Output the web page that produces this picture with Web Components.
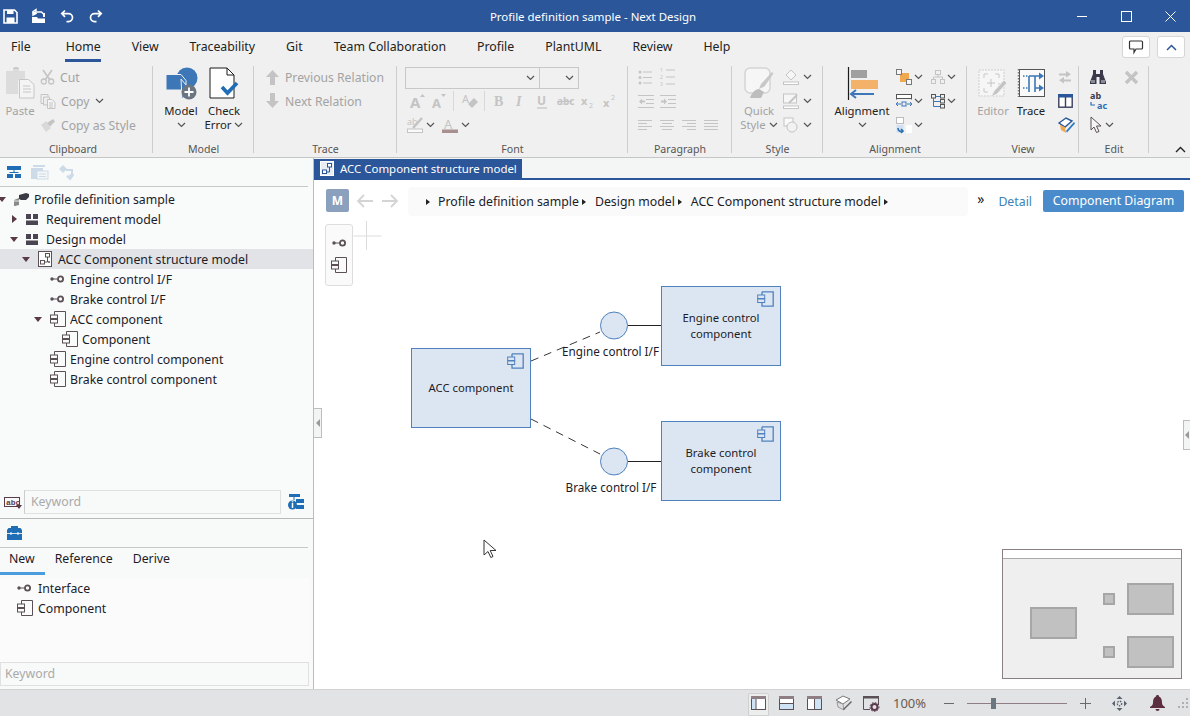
<!DOCTYPE html>
<html lang="en">
<head>
<meta charset="utf-8">
<title>Profile definition sample - Next Design</title>
<style>
  html, body { margin: 0; height: 100%; overflow: hidden; }
  body {
    font: 12.3px "Noto Sans", "Liberation Sans", sans-serif; color: #1c1c28; background: #fff;
    --fs-tree: 12.3px; --fs-small: 11.45px; --fs-tab: 12.3px; --fs-rb: 12.2px; --fs-big: 11.3px; --fs-label: 10.6px; --fs-dia: 11.3px; --fs-lab: 11.7px;
  }
</style>
</head>
<body>
<nd-app>
  <nd-titlebar slot="title">Profile definition sample - Next Design</nd-titlebar>

  <nd-tabs slot="tabs">
    <nd-tab style="margin-right:4px">File</nd-tab><nd-tab active>Home</nd-tab><nd-tab>View</nd-tab><nd-tab>Traceability</nd-tab>
    <nd-tab>Git</nd-tab><nd-tab>Team Collaboration</nd-tab><nd-tab>Profile</nd-tab><nd-tab>PlantUML</nd-tab>
    <nd-tab>Review</nd-tab><nd-tab>Help</nd-tab>
  </nd-tabs>

  <nd-ribbon slot="ribbon">
    <rb-group label="Clipboard" style="width:153px;--label-shift:7px">
      <rb-big icon="paste" width="40" disabled>Paste</rb-big>
      <rb-rows>
        <rb-small icon="cut" disabled>Cut</rb-small>
        <rb-small icon="copy" disabled chev>Copy</rb-small>
        <rb-small icon="brush" disabled>Copy as Style</rb-small>
      </rb-rows>
    </rb-group>
    <rb-group label="Model" style="width:101px">
      <rb-big icon="model" width="44" chev style="margin-left:6px">Model</rb-big>
      <rb-big icon="check" width="42">Check<span slot="l2">Error</span><nd-icon slot="l2" name="chev"></nd-icon></rb-big>
    </rb-group>
    <rb-group label="Trace" style="width:143px">
      <rb-rows style="padding-left:11px">
        <rb-small icon="up" disabled>Previous Relation</rb-small>
        <rb-small icon="down" disabled>Next Relation</rb-small>
      </rb-rows>
    </rb-group>
    <rb-group label="Font" style="width:231px">
      <rb-rows style="padding-left:8px">
        <rb-row><rb-combo style="width:135px"></rb-combo><rb-combo style="width:40px;margin-left:-1px"></rb-combo></rb-row>
        <rb-row disabled style="padding-left:5px">
          <nd-icon name="growA"></nd-icon><nd-icon name="shrinkA" style="margin-left:6px"></nd-icon>
          <rb-sep style="margin:0 8px 0 6px"></rb-sep>
          <nd-icon name="clearA"></nd-icon>
          <rb-sep style="margin:0 9px 0 6px"></rb-sep>
          <nd-icon name="bold"></nd-icon><nd-icon name="italic" style="margin-left:12px"></nd-icon>
          <nd-icon name="under" style="margin-left:11px"></nd-icon><nd-icon name="strike" style="margin-left:10px"></nd-icon>
          <nd-icon name="sub" style="margin-left:9px"></nd-icon><nd-icon name="sup" style="margin-left:9px"></nd-icon>
        </rb-row>
        <rb-row disabled style="padding-left:2px">
          <nd-icon name="marker"></nd-icon><nd-icon name="chev" style="margin-left:3px"></nd-icon>
          <nd-icon name="colorA" style="margin-left:7px"></nd-icon><nd-icon name="chev" style="margin-left:3px"></nd-icon>
        </rb-row>
      </rb-rows>
    </rb-group>
    <rb-group label="Paragraph" style="width:104px">
      <rb-rows style="padding-left:10px">
        <rb-row disabled><nd-icon name="bullets"></nd-icon><nd-icon name="numbers" style="margin-left:8px"></nd-icon></rb-row>
        <rb-row disabled><nd-icon name="outdent"></nd-icon><nd-icon name="indent" style="margin-left:6px"></nd-icon></rb-row>
        <rb-row disabled>
          <nd-icon name="alignL"></nd-icon><nd-icon name="alignC" style="margin-left:8px"></nd-icon>
          <nd-icon name="alignR" style="margin-left:8px"></nd-icon><nd-icon name="alignJ" style="margin-left:8px"></nd-icon>
        </rb-row>
      </rb-rows>
    </rb-group>
    <rb-group label="Style" style="width:91px">
      <rb-big icon="quick" width="42" disabled style="margin-left:6px">Quick<span slot="l2">Style</span><nd-icon slot="l2" name="chev"></nd-icon></rb-big>
      <rb-rows style="padding-left:3px">
        <rb-row disabled><nd-icon name="fill"></nd-icon><nd-icon name="chev" style="margin-left:4px"></nd-icon></rb-row>
        <rb-row disabled><nd-icon name="pen"></nd-icon><nd-icon name="chev" style="margin-left:4px"></nd-icon></rb-row>
        <rb-row disabled><nd-icon name="shapes"></nd-icon><nd-icon name="chev" style="margin-left:4px"></nd-icon></rb-row>
      </rb-rows>
    </rb-group>
    <rb-group label="Alignment" style="width:144px">
      <rb-big icon="align" width="60" chev style="margin-left:9px">Alignment</rb-big>
      <rb-rows style="padding-left:4px">
        <rb-row><nd-icon name="order"></nd-icon><nd-icon name="chev" style="margin-left:2px"></nd-icon></rb-row>
        <rb-row><nd-icon name="spread"></nd-icon><nd-icon name="chev" style="margin-left:2px"></nd-icon></rb-row>
        <rb-row><nd-icon name="flip"></nd-icon><nd-icon name="chev" style="margin-left:2px"></nd-icon></rb-row>
      </rb-rows>
      <rb-rows style="padding-left:8px">
        <rb-row disabled><nd-icon name="orgchart"></nd-icon><nd-icon name="chev" style="margin-left:2px"></nd-icon></rb-row>
        <rb-row><nd-icon name="treeview"></nd-icon><nd-icon name="chev" style="margin-left:2px"></nd-icon></rb-row>
      </rb-rows>
    </rb-group>
    <rb-group label="View" style="width:112px">
      <rb-big icon="editor" width="36" disabled style="margin-left:8px">Editor</rb-big>
      <rb-big icon="trace" width="36" style="margin-left:2px">Trace</rb-big>
      <rb-rows style="padding-left:9px">
        <rb-row disabled><nd-icon name="swap"></nd-icon></rb-row>
        <rb-row><nd-icon name="split"></nd-icon></rb-row>
        <rb-row><nd-icon name="stylepen"></nd-icon></rb-row>
      </rb-rows>
    </rb-group>
    <rb-group label="Edit" style="width:70px">
      <rb-rows style="padding-left:11px">
        <rb-row><nd-icon name="binoc"></nd-icon><nd-icon name="cross" style="margin-left:18px"></nd-icon></rb-row>
        <rb-row><nd-icon name="replace"></nd-icon></rb-row>
        <rb-row><nd-icon name="pointer"></nd-icon><nd-icon name="chev" style="margin-left:2px"></nd-icon></rb-row>
      </rb-rows>
    </rb-group>
  </nd-ribbon>

  <nd-sidebar slot="side">
    <tree-item level="0" icon="pkg" arrow="open">Profile definition sample</tree-item>
    <tree-item level="1" icon="blocks" arrow="closed">Requirement model</tree-item>
    <tree-item level="1" icon="blocks" arrow="open">Design model</tree-item>
    <tree-item level="2" icon="diagram" arrow="open" selected>ACC Component structure model</tree-item>
    <tree-item level="3" icon="iface">Engine control I/F</tree-item>
    <tree-item level="3" icon="iface">Brake control I/F</tree-item>
    <tree-item level="3" icon="comp" arrow="open">ACC component</tree-item>
    <tree-item level="4" icon="comp">Component</tree-item>
    <tree-item level="3" icon="comp">Engine control component</tree-item>
    <tree-item level="3" icon="comp">Brake control component</tree-item>

    <palette-item slot="palette" icon="iface">Interface</palette-item>
    <palette-item slot="palette" icon="comp">Component</palette-item>
  </nd-sidebar>

  <nd-editor slot="main">
    <nd-breadcrumb slot="crumbs">
      <span>Profile definition sample</span><span>Design model</span><span>ACC Component structure model</span>
    </nd-breadcrumb>
    <nd-diagram slot="canvas"></nd-diagram>
  </nd-editor>

  <nd-statusbar slot="status"></nd-statusbar>
</nd-app>

<script>
// Icons are drawn at their natural pixel size: [width, height, svg content]
const G = 'currentColor';
const ICONS = {
  save: [15, 15, `<path d="M1 1h10.500L14 3.500V14H1z" fill="none" stroke="#fff" stroke-width="1.600"/><rect x="4" y="1" width="6.500" height="4" fill="#fff"/><rect x="3.500" y="8.500" width="8" height="5.500" fill="#fff"/>`],
  open: [16, 15, `<path d="M1 8h5l1 1.500h7V14H1z" fill="#fff"/><path d="M2 6V2.500L5 .5v4zM6 3h4.500l3 3" fill="none" stroke="#fff" stroke-width="1.400"/><path d="M1.500 2.500h4V5h-4z" fill="#fff"/><path d="M12 4h2v4h-2z" fill="#fff"/>`],
  undo: [15, 14, `<path d="M5 1.500 1.800 4.600 5 7.800M2 4.600h6.500a4 4 0 0 1 0 8H6.500" fill="none" stroke="#fff" stroke-width="1.700"/>`],
  redo: [15, 14, `<path d="M10 1.500l3.200 3.100L10 7.800M13 4.600H6.500a4 4 0 0 0 0 8h2" fill="none" stroke="#fff" stroke-width="1.700"/>`],
  chev: [9, 6, `<path d="M1 1l3.500 3.500L8 1" fill="none" stroke="#555" stroke-width="1.200"/>`],

  paste: [30, 34, `<path d="M1 5h7V3h6v2h6v9h-7v14H1z" fill="#dcdcdc"/><path d="M8 3a3 2 0 0 1 6 0" fill="#c8c8c8"/><path d="M14.500 13.500h9l5.500 5v13.500h-14.500z" fill="#f4f4f4" stroke="#c6c6c6"/><path d="M18 20h7M18 23h8M18 26h8" stroke="#c6c6c6"/>`],
  cut: [15, 16, `<path d="M3 1l7 10M12 1 5 11" stroke="${G}" stroke-width="1.600"/><circle cx="3.800" cy="12.500" r="2.500" fill="none" stroke="${G}" stroke-width="1.300"/><circle cx="11.200" cy="12.500" r="2.500" fill="none" stroke="${G}" stroke-width="1.300"/>`],
  copy: [16, 16, `<path d="M1 1.500h7v2M1 1.500v9h4" fill="none" stroke="${G}"/><path d="M3.500 4h6v8h-6z" fill="#ececec" stroke="${G}"/><path d="M7.500 6.500h4.500l3 3v6H7.500z" fill="#f4f4f4" stroke="${G}"/><path d="M9 10h4M9 12h4M9 14h4" stroke="${G}"/>`],
  brush: [16, 15, `<path d="M1 7l5-4 5 7-5 4z" fill="#d9d9d9"/><path d="M7 5l6-4 2 2.500-5 5z" fill="${G}"/>`],
  up: [15, 16, `<path d="M7.500 1 14 8h-4v8H5V8H1z" fill="${G}"/>`],
  down: [15, 16, `<path d="M7.500 15 1 8h4V0h5v8h4z" fill="${G}"/>`],
  model: [33, 33, `<circle cx="22" cy="11" r="10.500" fill="#3d77b7"/><path d="M1 7.500h15l5 6V23H1z" fill="#3d77b7" stroke="#f0f0f0"/><path d="M16 12 26 24l-9 8z" fill="#3d77b7" stroke="#f0f0f0"/><circle cx="24" cy="25" r="7.500" fill="#6c7680"/><path d="M24 20.500v9M19.500 25h9" stroke="#fff" stroke-width="1.800"/>`],
  check: [30, 32, `<path d="M1 1h17l7 7v23H1z" fill="#fff" stroke="#1c1c1c" stroke-width="1"/><path d="M18 1v7h7" fill="none" stroke="#1c1c1c"/><path d="M13 20l5.500 6L28 16" fill="none" stroke="#1f6eb5" stroke-width="3.600"/>`],

  growA: [16, 16, `<text x="0" y="15" font-size="15" font-weight="700" fill="${G}">A</text><path d="M10 4l2.500-3L15 4z" fill="${G}"/>`],
  shrinkA: [15, 16, `<text x="0" y="15" font-size="13" font-weight="700" fill="${G}">A</text><path d="M9 1h5l-2.500 3z" fill="${G}"/>`],
  clearA: [16, 16, `<text x="0" y="10" font-size="11" fill="${G}">A</text><path d="M6 11l6-6 4 4-6 6z" fill="${G}"/>`],
  bold: [10, 14, `<text x="0" y="12" font-size="14" font-weight="700" font-family="Liberation Serif" fill="${G}">B</text>`],
  italic: [10, 14, `<text x="0" y="12" font-size="14" font-style="italic" font-weight="700" font-family="Liberation Serif" fill="${G}">I</text>`],
  under: [10, 15, `<text x="0" y="11" font-size="12" font-weight="700" fill="${G}">U</text><path d="M0 14h10" stroke="${G}" stroke-width="1.300"/>`],
  strike: [15, 12, `<text x="0" y="10" font-size="10" font-weight="700" fill="${G}">abc</text><path d="M0 6.500h15" stroke="${G}"/>`],
  sub: [13, 14, `<text x="0" y="11" font-size="11" font-weight="700" fill="${G}">x</text><text x="8" y="14" font-size="7" fill="${G}">2</text>`],
  sup: [13, 14, `<text x="0" y="13" font-size="11" font-weight="700" fill="${G}">x</text><text x="8" y="6" font-size="7" fill="${G}">2</text>`],
  marker: [16, 16, `<text x="0" y="8" font-size="9" fill="${G}">ab</text><path d="M6 11 15 1" stroke="${G}" stroke-width="2.500"/><rect x=".5" y="12" width="15" height="3.500" fill="#fbfbfb" stroke="${G}"/>`],
  colorA: [16, 16, `<text x="2" y="12" font-size="13" fill="${G}">A</text><rect y="12.500" width="16" height="3.500" fill="#a89090"/>`],

  bullets: [14, 15, `<g fill="${G}"><circle cx="2" cy="2" r="1.500"/><circle cx="2" cy="7.500" r="1.500"/><circle cx="2" cy="13" r="1.500"/></g><path d="M5 2h9M5 7.500h9M5 13h9" stroke="${G}"/>`],
  numbers: [15, 18, `<text x="0" y="4" font-size="5" fill="${G}">1</text><text x="0" y="11" font-size="5" fill="${G}">2</text><text x="0" y="18" font-size="5" fill="${G}">3</text><path d="M6 2h9M6 9h9M6 16h9" stroke="${G}"/>`],
  outdent: [16, 13, `<path d="M0 .500h16M8 4.500h8M8 8.500h8M0 12.500h16" stroke="${G}"/><path d="M1 6.500l3-3v2h3v2H4v2z" fill="${G}"/>`],
  indent: [16, 13, `<path d="M0 .500h16M8 4.500h8M8 8.500h8M0 12.500h16" stroke="${G}"/><path d="M7 6.500l-3-3v2H1v2h3v2z" fill="${G}"/>`],
  alignL: [14, 10, `<path d="M0 .500h14M0 3.500h9M0 6.500h14M0 9.500h9" stroke="${G}"/>`],
  alignC: [14, 10, `<path d="M0 .500h14M2 3.500h10M0 6.500h14M2 9.500h10" stroke="${G}"/>`],
  alignR: [14, 10, `<path d="M0 .500h14M5 3.500h9M0 6.500h14M5 9.500h9" stroke="${G}"/>`],
  alignJ: [14, 10, `<path d="M0 .500h14M0 3.500h14M0 6.500h14M0 9.500h14" stroke="${G}"/>`],

  quick: [30, 32, `<rect x="1" y="1" width="25" height="25" rx="5" fill="#f6f6f6" stroke="#d4d4d4" stroke-width="1.500"/><path d="M15 22l2-5 11-12 1.500 1.500-9 13z" fill="#c8c8c8"/><path d="M6 31c1-4 5-9 9-9l5 3-3 6z" fill="#bdbdbd"/>`],
  fill: [16, 16, `<path d="M8 1 3 6l5 5 5-5z" fill="#f6f6f6" stroke="${G}"/><rect x=".5" y="13" width="15" height="2.500" fill="#fff" stroke="${G}"/>`],
  pen: [16, 16, `<rect x=".5" y="1" width="13" height="9" fill="#f6f6f6" stroke="${G}"/><path d="M6 10 14 2" stroke="${G}" stroke-width="2"/><rect x=".5" y="13" width="15" height="2.500" fill="#fff" stroke="${G}"/>`],
  shapes: [16, 16, `<rect x="1" y="1" width="9" height="8" fill="#fafafa" stroke="${G}"/><circle cx="9" cy="10" r="5" fill="#f2f2f2" stroke="${G}"/>`],

  align: [31, 33, `<path d="M1.500 0v33" stroke="#1c1c1c" stroke-width="1.200"/><rect x="4" y="3" width="16" height="8" fill="#a0a0a0"/><rect x="4" y="13" width="27" height="9" fill="#f2b26a"/><path d="M4 27h23M9 23l-5 4 5 4" fill="none" stroke="#3d77b7" stroke-width="2"/>`],
  order: [16, 16, `<rect x="4" y="4" width="9" height="9" fill="#f0a94e"/><rect x=".5" y=".5" width="5" height="5" fill="#f6f6f6" stroke="#777"/><rect x="10.500" y="10.500" width="5" height="5" fill="#f6f6f6" stroke="#777"/>`],
  spread: [16, 14, `<rect x=".5" y=".5" width="15" height="4" fill="#fff" stroke="#555"/><path d="M.5 4.500v1M15.500 4.500v1" stroke="#555"/><rect x="6" y="8" width="4" height="4" fill="none" stroke="#3d77b7"/><path d="M0 10h5M11 10h5M2 8l-2 2 2 2M14 8l2 2-2 2" fill="none" stroke="#3d77b7"/>`],
  flip: [16, 16, `<rect x=".5" y=".5" width="7" height="6" fill="#fff" stroke="#bbb"/><rect x=".5" y="8" width="7" height="7.500" fill="#cfe0f2"/><rect x="10" y="8" width="6" height="8" fill="#fff"/><path d="M2 11c0 3 2 4 5 3M5 12l2 2-2 2" fill="none" stroke="#2d6fb3" stroke-width="1.600"/>`],
  orgchart: [14, 14, `<g fill="none" stroke="${G}"><rect x="4.500" y=".5" width="5" height="4"/><rect x=".5" y="9.500" width="4" height="4"/><rect x="9.500" y="9.500" width="4" height="4"/><path d="M7 4.500V7H2.500v2.500M7 7h4.500v2.500"/></g>`],
  treeview: [14, 15, `<g fill="none" stroke="#555"><rect x=".5" y=".5" width="4" height="3.500"/><rect x="9.500" y=".5" width="4" height="3.500"/><rect x="9.500" y="5.500" width="4" height="3.500"/><rect x="9.500" y="10.500" width="4" height="3.500"/></g><path d="M2.500 4v8.500h7M2.500 7.500h7M4.500 2.500h5" fill="none" stroke="#3d77b7"/>`],
  editor: [30, 29, `<rect x="1" y="1" width="25" height="26" fill="#f6f6f6" stroke="#cfcfcf" stroke-dasharray="2 1"/><path d="M6 9V5h4M17 5h4v4M6 19v4h4M21 14v2" fill="none" stroke="#c8c8c8"/><path d="M13 10v8M9 14h8" stroke="#c4c4c4"/><path d="M13 28l3-6 10-11 3 3-10 11z" fill="#c4c4c4" stroke="#f0f0f0"/>`],
  trace: [27, 28, `<rect x="1.500" y=".5" width="25" height="27" fill="#fafafa" stroke="#555"/><path d="M.5 0v28" stroke="#777" stroke-width="1.400" stroke-dasharray="1.500 1.500"/><path d="M5 7h5M5 19h5" stroke="#3d77b7" stroke-width="1.600" stroke-dasharray="1.500 1.500"/><path d="M11 7v16M17 7v16M11 7h6M17 7h4M17 19h4" fill="none" stroke="#3d77b7" stroke-width="1.600"/><path d="M21 3.500 26 7l-5 3.500zM21 15.500l5 3.500-5 3.500z" fill="#3d77b7"/>`],
  swap: [14, 13, `<path d="M1 2.500h7V0l5 3.200-5 3.200V4.500H1z" fill="${G}"/><path d="M13 8.500H6V6l-5 3.200 5 3.200v-2h7z" fill="${G}"/>`],
  split: [15, 14, `<rect x=".8" y=".8" width="13.400" height="12.400" fill="#fff" stroke="#3a3f5c" stroke-width="1.400"/><rect x="0" y="0" width="15" height="3.500" fill="#2b579a"/><path d="M7.500 3v10" stroke="#3a3f5c" stroke-width="1.400"/>`],
  stylepen: [17, 17, `<path d="M1 6l7-5 6 3-7 6z" fill="#fff" stroke="#2b579a" stroke-width="1.400"/><path d="M2 8l5 2 1 6-5-3z" fill="#f0a94e"/><path d="M8 14l8-9 1 1.500-8 9z" fill="#2b78c0"/>`],
  binoc: [16, 14, `<path d="M3 0h3v4h4V0h3v4l3 8v2H9.500V7h-3v7H0v-2l3-8z" fill="#3a3a4a"/><rect x="1" y="10" width="4" height="3" fill="#8a8a96"/><rect x="11" y="10" width="4" height="3" fill="#8a8a96"/>`],
  cross: [15, 15, `<path d="M2 2l11 11M13 2 2 13" stroke="#c4c4c4" stroke-width="3.400"/>`],
  replace: [17, 19, `<text x="0" y="7" font-size="9" font-weight="700" fill="#3a3a4a">ab</text><text x="7" y="17" font-size="9" font-weight="700" fill="#2d6fb3">ac</text><path d="M1 10v3h4" fill="none" stroke="#2d6fb3" stroke-width="1.200"/>`],
  pointer: [13, 18, `<path d="M1 1v13l3-3 2.500 5.500 2.500-1L6.500 10H11z" fill="#f6f6f6" stroke="#5a5055"/>`],

  hier: [14, 12, `<g fill="#1f6eb5"><rect width="14" height="4"/><rect x="6.500" y="4" width="1" height="2"/><rect x="2.500" y="6" width="9" height="1"/><rect y="8" width="6" height="4"/><rect x="8" y="8" width="6" height="4"/></g>`],
  hierOff: [17, 14, `<rect x="2" y="0" width="12" height="2" fill="#cddbe8"/><rect x="0" y="3" width="12" height="11" fill="#cddbe8"/><rect x="6" y="6" width="11" height="8" fill="#f4f6f8" stroke="#cddbe8"/><path d="M8 9h7M8 11.500h7" stroke="#cddbe8"/>`],
  flowOff: [15, 16, `<path d="M1 5l4-4 4 4-4 4z" fill="#cddbe8"/><path d="M8 6h6v4M11 13l3-3 1 1-3 4-3-3z" fill="none" stroke="#cddbe8" stroke-width="2"/>`],
  pkg: [15, 13, `<path d="M0 7l5-2v7l-4 1H0z" fill="#8a8a8a"/><path d="M0 8h5" stroke="#e8e8e8"/><path d="M5 2l7-2 3 1v3l-3 3H7l-2-1z" fill="#3a3a44"/>`],
  blocks: [12, 11, `<rect x="0" y="0" width="5" height="5" fill="#4a4550"/><rect x="7" y="0" width="5" height="5" fill="#4a4550"/><rect x="0" y="6.500" width="12" height="4.500" fill="#4a4550"/>`],
  diagram: [14, 16, `<rect x=".5" y=".5" width="13" height="15" fill="#fff" stroke="#5a5055"/><rect x="7.500" y="2.500" width="4" height="3.500" fill="none" stroke="#5a5055"/><rect x="2.500" y="9.500" width="4" height="3.500" fill="none" stroke="#5a5055"/><path d="M9.500 6v5h-3" fill="none" stroke="#5a5055"/><circle cx="11" cy="11" r="1" fill="#5a5055"/>`],
  docdiagram: [14, 15, `<rect x=".5" y=".5" width="13" height="14" fill="#e8edf4" stroke="#fff"/><rect x="7.500" y="2.500" width="4" height="3.500" fill="#fff" stroke="#2b579a"/><rect x="2.500" y="9" width="4" height="3.500" fill="#fff" stroke="#2b579a"/><path d="M9.500 6v5h-3" fill="none" stroke="#2b579a"/>`],
  iface: [15, 8, `<circle cx="2" cy="4" r="1.700" fill="#5a5055"/><path d="M3 4h4" stroke="#5a5055"/><circle cx="10.500" cy="4" r="2.600" fill="none" stroke="#5a5055" stroke-width="1.800"/>`],
  comp: [16, 16, `<path d="M4.500 .5h11v15h-11V12M4.500 4V.5M4.500 8.500V7.500" fill="none" stroke="#5a5055"/><rect x=".5" y="4" width="7" height="3.500" fill="none" stroke="#5a5055"/><rect x=".5" y="8.500" width="7" height="3.500" fill="none" stroke="#5a5055"/>`],
  compBlue: [17, 16, `<path d="M5 .8h11.200v14.400H5V11M5 4V.8M5 8.500V8" fill="none" stroke="#4f81bd" stroke-width="1.300"/><rect x=".7" y="4" width="7" height="3.500" fill="#dce6f2" stroke="#4f81bd"/><rect x=".7" y="8" width="7" height="3.500" fill="#dce6f2" stroke="#4f81bd"/>`],
  abc: [18, 14, `<rect x=".5" y="1.500" width="15" height="9" fill="none" stroke="#5b3a4a"/><text x="2" y="9" font-size="8" font-weight="700" font-family="Liberation Mono" fill="#5b3a4a">abc</text><path d="M12 9h6l-3 4z" fill="#5b3a4a"/>`],
  info: [16, 16, `<rect x="1" y="0" width="11" height="3" fill="#1f6eb5"/><path d="M6 3v3" stroke="#1f6eb5"/><rect x="8" y="5" width="8" height="4" fill="#1f6eb5"/><rect x="8" y="11" width="8" height="4" fill="#1f6eb5"/><circle cx="4.500" cy="11" r="4.500" fill="#1f6eb5"/><path d="M4.500 9v5M4.500 7.200v1" stroke="#fff" stroke-width="1.500"/>`],
  toolbox: [15, 14, `<path d="M4 2V0h7v2h2.500L15 4v10H0V4l1.500-2z" fill="#1f6eb5"/><path d="M0 7.500h15" stroke="#fff" stroke-width=".8"/><path d="M4 6v3M11 6v3" stroke="#fff"/>`],
  back: [16, 14, `<path d="M7 1 1 7l6 6M1 7h15" fill="none" stroke="#d4d4d4" stroke-width="1.800"/>`],
  forward: [16, 14, `<path d="M9 1l6 6-6 6M15 7H0" fill="none" stroke="#d4d4d4" stroke-width="1.800"/>`],

  layoutA: [15, 14, `<rect x=".5" y=".5" width="14" height="13" fill="#fff" stroke="#5a5055"/><rect y="0" width="15" height="3" fill="#8f7f85"/><rect x="1" y="3" width="4" height="10" fill="#cfe3f5"/><path d="M5 3v10" stroke="#5a5055"/>`],
  layoutB: [15, 14, `<rect x=".5" y=".5" width="14" height="13" fill="#fff" stroke="#5a5055"/><rect y="0" width="15" height="3" fill="#8f7f85"/><rect x="1" y="8" width="13" height="5" fill="#cfe3f5"/><path d="M0 7.500h15" stroke="#5a5055"/>`],
  layoutC: [15, 14, `<rect x=".5" y=".5" width="14" height="13" fill="#fff" stroke="#5a5055"/><rect y="0" width="15" height="3" fill="#8f7f85"/><rect x="8" y="3" width="6" height="10" fill="#cfe3f5"/><path d="M7.500 3v10" stroke="#5a5055"/>`],
  pens: [17, 16, `<path d="M1 5l7-4 7 3-7 5z" fill="#fff" stroke="#777"/><path d="M2 7l6 2 1 6-6-3z" fill="#ddd" stroke="#999"/><path d="M8 14l8-8 1 1-8 8z" fill="#666"/>`],
  winset: [16, 15, `<path d="M.5 13.500V.5h15V9M.5 13.500H7" fill="none" stroke="#5a5055"/><rect y="0" width="16" height="2.500" fill="#5a5055"/><circle cx="11.500" cy="11" r="3" fill="none" stroke="#5a3a48" stroke-width="2"/><circle cx="11.500" cy="11" r="4.500" fill="none" stroke="#5a3a48" stroke-dasharray="1.500 1.500"/>`],
  move: [15, 15, `<path d="M7.500 0l3 3h-6zM7.500 15l3-3h-6zM0 7.500l3-3v6zM15 7.500l-3-3v6z" fill="#5a6470"/><circle cx="7.500" cy="7.500" r="2.200" fill="none" stroke="#5a6470" stroke-width="1.400" stroke-dasharray="1.400 1"/>`],
  bell: [15, 16, `<path d="M7.500 0c1 0 1.500.5 1.500 1.500C11.500 2.500 12 5 12 8c0 2 1.500 3 3 4v1H0v-1c1.500-1 3-2 3-4 0-3 .5-5.500 3-6.500C6 .5 6.500 0 7.500 0z" fill="#5b2f40"/><path d="M5.500 14a2 2 0 0 0 4 0z" fill="#5b2f40"/>`],
  grip: [10, 10, `<g fill="#aeb0b3"><rect x="8" y="0" width="2" height="2"/><rect x="4" y="4" width="2" height="2"/><rect x="8" y="4" width="2" height="2"/><rect x="0" y="8" width="2" height="2"/><rect x="4" y="8" width="2" height="2"/><rect x="8" y="8" width="2" height="2"/></g>`],
  feedback: [14, 14, `<path d="M1.500 1h11a1 1 0 0 1 1 1v6a1 1 0 0 1-1 1H7l-2 3.500V9H1.500a1 1 0 0 1-1-1V2a1 1 0 0 1 1-1z" fill="#fff" stroke="#333" stroke-width="1.200"/>`],
  chevUp: [11, 7, `<path d="M1 6l4.500-4.500L10 6" fill="none" stroke="#2b579a" stroke-width="1.500"/>`],
  chevUpDark: [11, 7, `<path d="M1 6l4.500-4.500L10 6" fill="none" stroke="#222" stroke-width="1.400"/>`]
};

// Small base class: sets up the open shadow root and renders once connected
class ShadowEl extends HTMLElement {
  constructor() {
    super();
    this.attachShadow({ mode: 'open' });
  }
  connectedCallback() {
    this.shadowRoot.innerHTML = `<style>${this.css()}</style>${this.html()}`;
  }
  css() { return ':host{display:block}'; }
  html() { return '<slot></slot>'; }
}

class NdIcon extends ShadowEl {
  css() { return ':host{display:inline-flex;flex:none;line-height:0}svg{display:block;overflow:visible;font-family:"Noto Sans","Liberation Sans",sans-serif}'; }
  html() {
    const [w, h, body] = ICONS[this.getAttribute('name')] || [16, 16, ''];
    return `<svg xmlns="http://www.w3.org/2000/svg" width="${w}" height="${h}" viewBox="0 0 ${w} ${h}">${body}</svg>`;
  }
}
customElements.define('nd-icon', NdIcon);

class NdApp extends ShadowEl {
  css() {
    return `:host{display:grid;grid-template-rows:32px 32px 94px 531px 27px;grid-template-columns:314px 876px;width:1190px;height:716px}
      .top{grid-column:1/3;min-width:0}`;
  }
  html() {
    return `<div class="top"><slot name="title"></slot></div>
      <div class="top"><slot name="tabs"></slot></div>
      <div class="top"><slot name="ribbon"></slot></div>
      <slot name="side"></slot><slot name="main"></slot>
      <div class="top"><slot name="status"></slot></div>`;
  }
}
customElements.define('nd-app', NdApp);

class NdTitlebar extends ShadowEl {
  css() {
    return `:host{display:grid;grid-template-columns:1fr auto 1fr;align-items:center;height:32px;background:#2b579a;color:#fff;font-size:var(--fs-small)}
      .left{display:flex;align-items:center;gap:13px;padding-left:3px}
      .mid{padding-right:4px}
      .win{display:flex;justify-content:flex-end;margin-right:-2px}
      .win span{width:44px;height:32px;display:flex;align-items:center;justify-content:center}
      .min{width:10px;height:1px;background:#fff}
      .max{width:9px;height:9px;border:1px solid #fff}`;
  }
  html() {
    return `<div class="left"><nd-icon name="save"></nd-icon><nd-icon name="open"></nd-icon><nd-icon name="undo"></nd-icon><nd-icon name="redo"></nd-icon></div>
      <div class="mid"><slot></slot></div>
      <div class="win"><span><i class="min"></i></span><span><i class="max"></i></span>
      <span><svg width="11" height="11"><path d="M.5.5l10 10M10.500.5l-10 10" stroke="#fff"/></svg></span></div>`;
  }
}
customElements.define('nd-titlebar', NdTitlebar);

class NdTabs extends ShadowEl {
  css() {
    return `:host{display:flex;height:32px;background:#f0f0f0;padding-left:11px;gap:31px;position:relative}
      .btns{position:absolute;right:5px;top:4px;display:flex;gap:7px}
      .btns span{width:26px;height:20px;background:#fff;border:1px solid #d6d6d6;border-radius:3px;display:flex;align-items:center;justify-content:center}`;
  }
  html() {
    return `<slot></slot><div class="btns"><span><nd-icon name="feedback"></nd-icon></span><span><nd-icon name="chevUp"></nd-icon></span></div>`;
  }
}
customElements.define('nd-tabs', NdTabs);

class NdTab extends ShadowEl {
  css() {
    return `:host{display:block;position:relative;line-height:30px;font-size:var(--fs-tab);color:#222;white-space:nowrap}
      :host([active])::after{content:"";position:absolute;left:-1px;right:0;top:27px;height:3px;background:#2b579a}`;
  }
}
customElements.define('nd-tab', NdTab);

class NdRibbon extends ShadowEl {
  css() {
    return `:host{display:flex;position:relative;height:94px;background:#f0f0f0;border-bottom:1px solid #c6c6c6;box-sizing:border-box}
      nd-icon{position:absolute;right:4px;bottom:4px}`;
  }
  html() { return `<slot></slot><nd-icon name="chevUpDark"></nd-icon>`; }
}
customElements.define('nd-ribbon', NdRibbon);

class RbGroup extends ShadowEl {
  css() {
    return `:host{display:flex;flex-direction:column;flex:none;box-sizing:border-box;height:93px;position:relative}
      :host::after{content:"";position:absolute;right:0;top:2px;bottom:4px;width:1px;background:#cdcdcd}
      .body{display:flex;height:76px;padding-top:1px}
      .label{text-align:center;line-height:16px;color:#555;font-size:var(--fs-label);padding-right:var(--label-shift,0)}`;
  }
  html() {
    return `<div class="body"><slot></slot></div><div class="label">${this.getAttribute('label')}</div>`;
  }
}
customElements.define('rb-group', RbGroup);

class RbBig extends ShadowEl {
  css() {
    const w = this.getAttribute('width') || 40;
    return `:host{display:flex;flex-direction:column;align-items:center;flex:none;width:${w}px;color:#222;font-size:var(--fs-big)}
      :host([disabled]){color:#a3a3a3}
      .ic{height:36px;padding-bottom:3px;display:flex;align-items:center;justify-content:center}
      .ln{line-height:14px;height:14px;white-space:nowrap;display:flex;align-items:center;gap:3px}`;
  }
  html() {
    const chev = this.hasAttribute('chev') ? '<nd-icon name="chev"></nd-icon>' : '';
    return `<div class="ic"><nd-icon name="${this.getAttribute('icon')}"></nd-icon></div>
      <div class="ln"><slot></slot></div><div class="ln"><slot name="l2"></slot>${chev}</div>`;
  }
}
customElements.define('rb-big', RbBig);

class RbRows extends ShadowEl {
  css() { return ':host{display:flex;flex-direction:column;flex:none}'; }
}
customElements.define('rb-rows', RbRows);

class RbRow extends ShadowEl {
  css() { return ':host{display:flex;align-items:center;height:24px;color:#222}:host([disabled]){color:#c4c4c4}'; }
}
customElements.define('rb-row', RbRow);

class RbSmall extends ShadowEl {
  css() {
    return `:host{display:flex;align-items:center;height:24px;gap:5px;color:#222;font-size:var(--fs-rb);white-space:nowrap}
      :host([disabled]){color:#a3a3a3}
      .ic{color:#c4c4c4;display:flex}`;
  }
  html() {
    const chev = this.hasAttribute('chev') ? '<nd-icon name="chev"></nd-icon>' : '';
    return `<span class="ic"><nd-icon name="${this.getAttribute('icon')}"></nd-icon></span><slot></slot>${chev}`;
  }
}
customElements.define('rb-small', RbSmall);

class RbCombo extends ShadowEl {
  css() {
    return `:host{display:flex;align-items:center;justify-content:flex-end;height:22px;margin-top:2px;box-sizing:border-box;border:1px solid #c8c8c8;padding-right:4px;flex:none}`;
  }
  html() { return '<nd-icon name="chev"></nd-icon>'; }
}
customElements.define('rb-combo', RbCombo);

class RbSep extends ShadowEl {
  css() { return ':host{display:block;width:1px;height:20px;background:#d8d8d8;flex:none}'; }
  html() { return ''; }
}
customElements.define('rb-sep', RbSep);

class TreeItem extends ShadowEl {
  css() {
    const lv = Number(this.getAttribute('level') || 0);
    return `:host{display:flex;align-items:center;height:20px;padding-left:${12 * lv}px;font-size:var(--fs-tree);white-space:nowrap;color:#1c1c28}
      :host([selected]){background:#e1e3e6}
      .ar{width:12px;height:20px;margin-left:-4px;display:flex;align-items:center;justify-content:center;flex:none}
      .ic{width:26px;display:flex;justify-content:flex-start;padding-left:6px;box-sizing:border-box;flex:none}`;
  }
  html() {
    const a = this.getAttribute('arrow');
    const arrow = a === 'open' ? '<svg width="8" height="5"><path d="M0 0h8L4 5z" fill="#5a3a44"/></svg>'
      : a === 'closed' ? '<svg width="5" height="8"><path d="M0 0l5 4-5 4z" fill="#5a3a44"/></svg>' : '';
    return `<span class="ar">${arrow}</span><span class="ic"><nd-icon name="${this.getAttribute('icon')}"></nd-icon></span><slot></slot>`;
  }
}
customElements.define('tree-item', TreeItem);

class PaletteItem extends ShadowEl {
  css() {
    return `:host{display:flex;align-items:center;height:20px;padding-left:17px;font-size:var(--fs-tree);color:#1c1c28}
      .ic{width:21px;display:flex;flex:none}`;
  }
  html() { return `<span class="ic"><nd-icon name="${this.getAttribute('icon')}"></nd-icon></span><slot></slot>`; }
}
customElements.define('palette-item', PaletteItem);

class NdSidebar extends ShadowEl {
  css() {
    return `:host{display:flex;flex-direction:column;height:531px;box-sizing:border-box;background:#f8f9f9;border-right:1px solid #bcbcbc;font-size:var(--fs-tree)}
      .bar{height:28px;margin-right:5px;border-bottom:1px solid #c8c8c8;display:flex;align-items:center;gap:10px;padding-left:7px;flex:none}
      .tree{flex:none;height:303px;padding-top:2px;box-sizing:border-box;overflow:hidden;background:#f9fafa}
      .search{flex:none;height:29px;border-bottom:1px solid #b8b8b8;padding:0 9px 0 4px;display:flex;align-items:flex-start;box-sizing:border-box}
      .search .in{width:258px;height:24px;margin-left:2px;border:1px solid #e0e0e0;border-left:1px solid #ccc;box-sizing:border-box;padding-left:6px;line-height:22px;color:#aaa}
      .search .abc{margin-top:6px}
      .search .inf{margin:4px 0 0 7px}
      .head{flex:none;height:29px;margin-right:5px;border-bottom:1px solid #c8c8c8;display:flex;align-items:center;padding-left:7px;box-sizing:border-box}
      .tabs{flex:none;display:flex;height:26px}
      .tabs span{padding:0 10px;line-height:22px;position:relative}
      .tabs .on{padding-left:9px}
      .tabs .on::after{content:"";position:absolute;left:0;right:0;bottom:-1px;height:3px;background:#4a9ede}
      .list{flex:none;height:84px;margin-top:4px;background:#fbfbfb;box-sizing:border-box;margin-right:4px}
      .kw{flex:none;height:24px;margin-right:4px;border:1px solid #e0e0e0;box-sizing:border-box;padding-left:4px;line-height:22px;color:#aaa}`;
  }
  html() {
    return `<div class="bar"><nd-icon name="hier"></nd-icon><nd-icon name="hierOff"></nd-icon><nd-icon name="flowOff"></nd-icon></div>
      <div class="tree"><slot></slot></div>
      <div class="search"><nd-icon class="abc" name="abc"></nd-icon><div class="in">Keyword</div><nd-icon class="inf" name="info"></nd-icon></div>
      <div class="head"><nd-icon name="toolbox"></nd-icon></div>
      <div class="tabs"><span class="on">New</span><span>Reference</span><span>Derive</span></div>
      <div class="list"><slot name="palette"></slot></div>
      <div class="kw">Keyword</div>`;
  }
}
customElements.define('nd-sidebar', NdSidebar);

class NdEditor extends ShadowEl {
  css() {
    return `:host{display:flex;flex-direction:column;height:531px;background:#fff;font-size:var(--fs-tree)}
      .strip{flex:none;height:22px;border-bottom:2px solid #2b579a;box-sizing:border-box;padding-top:1px;background:#f4f5f5}
      .tab{display:inline-flex;align-items:center;gap:6px;height:19px;width:208px;box-sizing:border-box;padding-left:6px;background:#2b579a;color:#fff;font-size:var(--fs-small);white-space:nowrap}
      .row{flex:none;height:36px;display:flex;align-items:center;padding:5px 6px 0 12px;box-sizing:border-box;margin-bottom:-36px;position:relative;z-index:1;width:876px}
      .m{width:23px;height:23px;border-radius:2px;background:#8aa0bd;color:#fff;font-weight:700;text-align:center;line-height:23px;font-size:12px;flex:none}
      .nav{display:flex;gap:9px;margin:0 10px 0 8px}
      .row ::slotted(nd-breadcrumb){margin-top:2px}
      .more{margin:0 14px 4px auto;font-size:14px;color:#222}
      .detail{color:#3b82b8;margin:1px 11px 0 0;white-space:nowrap}
      .kind{height:22px;width:141px;margin-top:1px;background:#4a8ccb;color:#fff;border-radius:2px;text-align:center;line-height:22px;white-space:nowrap;flex:none}
      .canvas{flex:1;position:relative;min-height:0}`;
  }
  html() {
    return `<div class="strip"><span class="tab"><nd-icon name="docdiagram"></nd-icon>ACC Component structure model</span></div>
      <div class="row"><span class="m">M</span><span class="nav"><nd-icon name="back"></nd-icon><nd-icon name="forward"></nd-icon></span>
      <slot name="crumbs"></slot><span class="more">»</span><span class="detail">Detail</span><span class="kind">Component Diagram</span></div>
      <div class="canvas"><slot name="canvas"></slot></div>`;
  }
}
customElements.define('nd-editor', NdEditor);

class NdBreadcrumb extends ShadowEl {
  css() {
    return `:host{display:flex;align-items:center;width:560px;height:29px;flex:none;background:#fafafa;border-radius:4px;padding-left:18px;box-sizing:border-box;color:#1c1c28;font-size:var(--fs-tree);white-space:nowrap}
      .t{width:0;height:0;border-left:4px solid #222;border-top:3px solid transparent;border-bottom:3px solid transparent;margin:0 8px 0 3px;flex:none}
      .t.first{margin-left:0}
      .t.later{margin-right:9px}`;
  }
  html() {
    const parts = [...this.querySelectorAll('span')].map(s => s.textContent);
    return parts.map((p, i) => `<i class="t ${i ? 'later' : 'first'}"></i><span>${p}</span>`).join('') + '<i class="t later"></i>';
  }
}
customElements.define('nd-breadcrumb', NdBreadcrumb);

// A node on the free diagram canvas: x, y are canvas coordinates
class DiagramNode extends ShadowEl {
  css() {
    return `:host{position:absolute;left:${this.getAttribute('x')}px;top:${this.getAttribute('y')}px;width:120px;height:80px;box-sizing:border-box;background:#dce6f2;border:1px solid #4f81bd;display:flex;align-items:center;justify-content:center;text-align:center;font-size:var(--fs-dia);line-height:16px;color:#1c1c28}
      nd-icon{position:absolute;right:6px;top:4px}`;
  }
  html() { return `<nd-icon name="compBlue"></nd-icon><div><slot></slot></div>`; }
}
customElements.define('diagram-node', DiagramNode);

class NdMinimap extends ShadowEl {
  css() {
    return `:host{position:absolute;left:688px;top:369px;width:180px;height:130px;box-sizing:border-box;border:1px solid #8a7f85;background:#efefef}
      .top{height:8px;background:#fff;border-bottom:1px solid #aaa}
      i{position:absolute;box-sizing:border-box;background:#c1c1c1;border:2px solid #a6a6a6}`;
  }
  html() {
    const box = (x, y, w, h) => `<i style="left:${x}px;top:${y}px;width:${w}px;height:${h}px"></i>`;
    return `<div class="top"></div>${box(27, 57, 47, 32)}${box(100, 43, 12, 12)}${box(100, 96, 12, 12)}${box(124, 33, 47, 32)}${box(124, 86, 47, 32)}`;
  }
}
customElements.define('nd-minimap', NdMinimap);

class NdDiagram extends ShadowEl {
  css() {
    return `:host{display:block;position:absolute;inset:0;overflow:hidden}
      svg.lines{position:absolute;left:0;top:0}
      .lab{position:absolute;font-size:var(--fs-lab);white-space:nowrap;color:#1c1c28;transform:translateX(-50%)}
      .palette{position:absolute;left:11px;top:44px;width:28px;height:62px;box-sizing:border-box;background:#fafafa;border:1px solid #ddd;border-radius:3px;display:flex;flex-direction:column;align-items:center;justify-content:space-between;padding:14px 0 12px}
      .handle{position:absolute;background:#f3f4f4;border:1px solid #bdbdbd;box-sizing:border-box;display:flex;align-items:center;justify-content:center}
      .handle svg{display:block}
      .cursor{position:absolute;left:169px;top:359px}`;
  }
  html() {
    return `<svg class="lines" width="876" height="509">
        <path d="M39.500 56h28M52.500 41v29" stroke="#dcdcdc" fill="none"/>
        <path d="M217 181l69-29M217 239l69 35" stroke="#3a3338" stroke-dasharray="8 6" fill="none"/>
        <path d="M314 145.500h33M314 281.500h33" stroke="#222" fill="none"/>
        <circle cx="300" cy="145.500" r="13.500" fill="#dce6f2" stroke="#4f81bd"/>
        <circle cx="300" cy="281.500" r="13.500" fill="#dce6f2" stroke="#4f81bd"/>
      </svg>
      <div class="palette"><nd-icon name="iface"></nd-icon><nd-icon name="comp"></nd-icon></div>
      <diagram-node x="97" y="168">ACC component</diagram-node>
      <diagram-node x="347" y="106">Engine control<br>component</diagram-node>
      <diagram-node x="347" y="241">Brake control<br>component</diagram-node>
      <span class="lab" style="left:296.500px;top:163px">Engine control I/F</span>
      <span class="lab" style="left:297px;top:299px">Brake control I/F</span>
      <div class="handle" style="left:0;top:228px;width:8px;height:30px;border-left:0"><svg width="4" height="8"><path d="M4 0 0 4l4 4z" fill="#9a9a9a"/></svg></div>
      <div class="handle" style="right:0;top:240px;width:7px;height:30px;border-right:0"><svg width="4" height="8"><path d="M4 0 0 4l4 4z" fill="#9a9a9a"/></svg></div>
      <svg class="cursor" width="14" height="20"><path d="M1 1v15l4-3.500 2.800 6 2.200-1-2.800-6H13z" fill="#fff" stroke="#333"/></svg>
      <nd-minimap></nd-minimap>`;
  }
}
customElements.define('nd-diagram', NdDiagram);

class NdStatusbar extends ShadowEl {
  css() {
    return `:host{display:flex;align-items:center;height:27px;background:#e1e3e5;border-top:1px solid #d2d2d2;box-sizing:border-box;position:relative;padding-left:751px;font-size:13px;color:#6a5a50}
      .on{position:relative;display:flex}
      .on::before{content:"";position:absolute;left:-3px;right:-3px;top:-3px;bottom:-6px;background:#eceded;border:1px solid #d0d0d0;border-radius:2px 2px 0 0}
      .on nd-icon{position:relative}
      .pct{margin:0 18px 0 14px}
      .slider{width:100px;height:1px;background:#8f7f85;position:relative;margin:0 13px;flex:none}
      .slider i{position:absolute;left:24px;top:-5px;width:5px;height:11px;background:#6b7680}
      .minus{width:10px;height:1px;background:#6a6a6a}
      .plus{width:11px;height:11px;background:linear-gradient(#6a6a6a,#6a6a6a) center/11px 1px no-repeat,linear-gradient(#6a6a6a,#6a6a6a) center/1px 11px no-repeat}`;
  }
  html() {
    return `<span class="on"><nd-icon name="layoutA"></nd-icon></span>
      <nd-icon name="layoutB" style="margin-left:13px"></nd-icon>
      <nd-icon name="layoutC" style="margin-left:13px"></nd-icon>
      <nd-icon name="pens" style="margin-left:13px"></nd-icon>
      <nd-icon name="winset" style="margin-left:11px"></nd-icon>
      <span class="pct">100%</span>
      <span class="minus"></span><span class="slider"><i></i></span><span class="plus"></span>
      <nd-icon name="move" style="margin-left:21px"></nd-icon>
      <nd-icon name="bell" style="margin-left:23px"></nd-icon>
      <nd-icon name="grip" style="margin-left:13px"></nd-icon>`;
  }
}
customElements.define('nd-statusbar', NdStatusbar);
</script>
</body>
</html>
